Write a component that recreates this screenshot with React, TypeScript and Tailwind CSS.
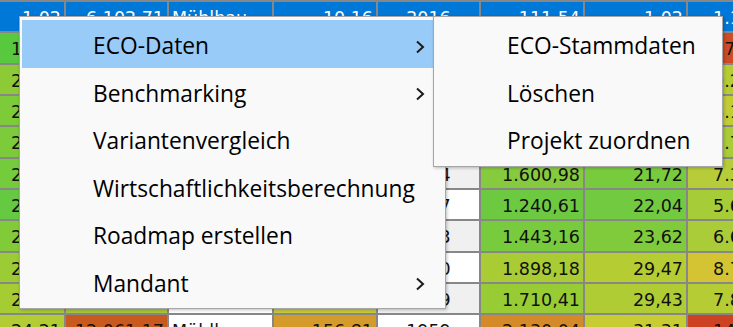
import React from 'react'

type Cell = { t: string; bg: string }

// column alignment: r = right, l = left, c = center
const align = ['r', 'r', 'l', 'r', 'c', 'r', 'r', 'l']

const selected: string[] = ['1,02', '6.102,71', 'Mühlbau', '10,16', '2016', '111,54', '1,02', '1.125,40']

// cells that sit fully under the context menu carry no text
const rows: Cell[][] = [
  [
    { t: '18,44', bg: 'bg-[#58c93e]' }, { t: '', bg: 'bg-[#7dc83a]' }, { t: '', bg: 'bg-white' },
    { t: '', bg: 'bg-[#8cc93a]' }, { t: '', bg: 'bg-[#f0f0f0]' }, { t: '', bg: 'bg-[#a6cc36]' },
    { t: '', bg: 'bg-[#c9c534]' }, { t: '17.204,55', bg: 'bg-[#cd4b25]' },
  ],
  [
    { t: '20,31', bg: 'bg-[#8ccb36]' }, { t: '', bg: 'bg-[#9cc936]' }, { t: '', bg: 'bg-white' },
    { t: '', bg: 'bg-[#a0c938]' }, { t: '', bg: 'bg-white' }, { t: '', bg: 'bg-[#90cb38]' },
    { t: '', bg: 'bg-[#a6cc36]' }, { t: '9.231,10', bg: 'bg-[#b5cc35]' },
  ],
  [
    { t: '21,05', bg: 'bg-[#7dcb38]' }, { t: '', bg: 'bg-[#86c93a]' }, { t: '', bg: 'bg-white' },
    { t: '', bg: 'bg-[#86c93a]' }, { t: '', bg: 'bg-[#f0f0f0]' }, { t: '', bg: 'bg-[#86cb3c]' },
    { t: '', bg: 'bg-[#9ccb38]' }, { t: '8.102,45', bg: 'bg-[#c2cc35]' },
  ],
  [
    { t: '22,87', bg: 'bg-[#7ccb3a]' }, { t: '', bg: 'bg-[#8ac93a]' }, { t: '', bg: 'bg-white' },
    { t: '', bg: 'bg-[#96c938]' }, { t: '', bg: 'bg-white' }, { t: '', bg: 'bg-[#80cb3c]' },
    { t: '', bg: 'bg-[#88cb3a]' }, { t: '7.745,20', bg: 'bg-[#aacc38]' },
  ],
  [
    { t: '21,94', bg: 'bg-[#74cb3c]' }, { t: '', bg: 'bg-[#80c93c]' }, { t: '', bg: 'bg-white' },
    { t: '', bg: 'bg-[#8cc93a]' }, { t: '1994', bg: 'bg-[#f0f0f0]' }, { t: '1.600,98', bg: 'bg-[#86cb3d]' },
    { t: '21,72', bg: 'bg-[#79cb3e]' }, { t: '7.312,08', bg: 'bg-[#b6cc38]' },
  ],
  [
    { t: '20,18', bg: 'bg-[#66c942]' }, { t: '', bg: 'bg-[#72c93e]' }, { t: '', bg: 'bg-white' },
    { t: '', bg: 'bg-[#7cc93c]' }, { t: '1997', bg: 'bg-white' }, { t: '1.240,61', bg: 'bg-[#6dca40]' },
    { t: '22,04', bg: 'bg-[#72ca40]' }, { t: '5.628,77', bg: 'bg-[#a6cc38]' },
  ],
  [
    { t: '23,12', bg: 'bg-[#82cb38]' }, { t: '', bg: 'bg-[#8ec93a]' }, { t: '', bg: 'bg-white' },
    { t: '', bg: 'bg-[#9ac938]' }, { t: '1983', bg: 'bg-[#f0f0f0]' }, { t: '1.443,16', bg: 'bg-[#79cb3e]' },
    { t: '23,62', bg: 'bg-[#80cb3c]' }, { t: '6.617,30', bg: 'bg-[#aacc38]' },
  ],
  [
    { t: '27,40', bg: 'bg-[#9bcb35]' }, { t: '', bg: 'bg-[#b2c636]' }, { t: '', bg: 'bg-white' },
    { t: '', bg: 'bg-[#c0c838]' }, { t: '1990', bg: 'bg-white' }, { t: '1.898,18', bg: 'bg-[#a9cc35]' },
    { t: '29,47', bg: 'bg-[#b6cc33]' }, { t: '8.745,19', bg: 'bg-[#d4c434]' },
  ],
  [
    { t: '28,66', bg: 'bg-[#a6cc34]' }, { t: '', bg: 'bg-[#a8c63a]' }, { t: '', bg: 'bg-white' },
    { t: '', bg: 'bg-[#c9c93b]' }, { t: '1989', bg: 'bg-[#f0f0f0]' }, { t: '1.710,41', bg: 'bg-[#98cc35]' },
    { t: '29,43', bg: 'bg-[#afcc34]' }, { t: '7.823,64', bg: 'bg-[#b6cc35]' },
  ],
  [
    { t: '24,21', bg: 'bg-[#b2cc34]' }, { t: '12.061,17', bg: 'bg-[#c95a1f]' }, { t: 'Mühlbau', bg: 'bg-white' },
    { t: '156,81', bg: 'bg-[#d49a2a]' }, { t: '1959', bg: 'bg-white' }, { t: '2.130,04', bg: 'bg-[#d58a29]' },
    { t: '31,31', bg: 'bg-[#c8cc33]' }, { t: '14.552,80', bg: 'bg-[#cd4222]' },
  ],
]

function GridCell({ text, col, bg, white }: { text: string; col: number; bg: string; white?: boolean }) {
  const a = align[col]
  return (
    <div
      className={`${bg} flex items-center pt-[3px] overflow-hidden whitespace-nowrap ${
        a === 'r' ? 'justify-end pr-[3px]' : a === 'c' ? 'justify-center' : col === 7 ? 'pl-[25px]' : 'pl-[3px]'
      } ${white ? 'text-white' : 'text-[#111]'}`}
    >
      {text}
    </div>
  )
}

function Chevron() {
  return (
    <svg width="10" height="14" viewBox="0 0 10 14" className="ml-auto mr-[18px] shrink-0">
      <polyline points="2,1.5 8,7 2,12.5" fill="none" stroke="#1a1a1a" strokeWidth="2" />
    </svg>
  )
}

function MenuItem({ label, sub, active }: { label: string; sub?: boolean; active?: boolean }) {
  return (
    <div className={`h-[47.5px] flex items-center pt-[6px] pl-[71px] ${active ? 'bg-[#99cbf9]' : ''}`}>
      <span className="leading-none text-black whitespace-nowrap">{label}</span>
      {sub && <Chevron />}
    </div>
  )
}

export default function App() {
  return (
    <div className="relative w-[733px] h-[327px] overflow-hidden bg-[#878787] font-['DejaVu_Sans',sans-serif] text-[17.5px]">
      {/* grid */}
      <div className="grid grid-cols-[64px_101px_103px_102px_101px_102px_101px_107px] auto-rows-[29.33px] gap-[2px] pt-[2px]">
        {selected.map((t, i) => (
          <GridCell key={'s' + i} text={t} col={i} bg="bg-[#0078d7]" white />
        ))}
        {rows.map((r, ri) =>
          r.map((c, ci) => <GridCell key={ri + '-' + ci} text={c.t} col={ci} bg={c.bg} />)
        )}
      </div>

      {/* context menu */}
      <div className="absolute left-[19px] top-[16px] w-[427px] bg-[#f9f9f9] border border-[#a6a6a6] px-[2px] py-[3px] shadow-[1px_1px_3px_rgba(0,0,0,0.25)] font-['Open_Sans',sans-serif] text-[22.75px]">
        <MenuItem label="ECO-Daten" sub active />
        <MenuItem label="Benchmarking" sub />
        <MenuItem label="Variantenvergleich" />
        <MenuItem label="Wirtschaftlichkeitsberechnung" />
        <MenuItem label="Roadmap erstellen" />
        <MenuItem label="Mandant" sub />
      </div>

      {/* submenu */}
      <div className="absolute left-[433px] top-[16px] w-[290px] bg-[#f9f9f9] border border-[#a6a6a6] px-[2px] py-[3px] shadow-[1px_1px_3px_rgba(0,0,0,0.25)] font-['Open_Sans',sans-serif] text-[22.75px]">
        <MenuItem label="ECO-Stammdaten" />
        <MenuItem label="Löschen" />
        <MenuItem label="Projekt zuordnen" />
      </div>
    </div>
  )
}
